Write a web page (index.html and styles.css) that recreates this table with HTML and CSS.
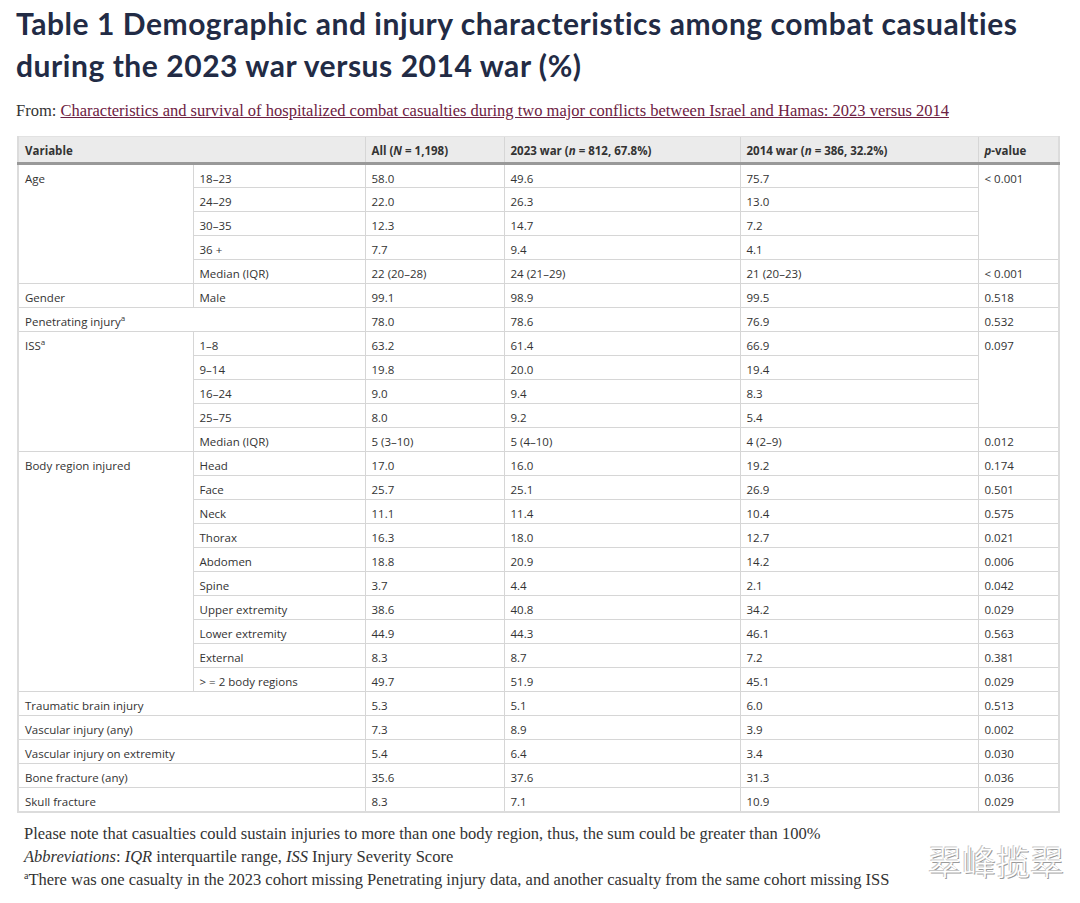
FILE: index.html
```html
<!DOCTYPE html>
<html lang="en">
<head>
<meta charset="utf-8">
<title>Table 1</title>
<link rel="stylesheet" href="styles.css">
</head>
<body>
<div class="page">
  <h1 class="title">Table 1 Demographic and injury characteristics among combat casualties during the 2023 war versus 2014 war (%)</h1>
  <p class="from">From: <a href="#">Characteristics and survival of hospitalized combat casualties during two major conflicts between Israel and Hamas: 2023 versus 2014</a></p>
  <table class="data">
    <colgroup>
      <col class="c1"><col class="c2"><col class="c3"><col class="c4"><col class="c5"><col class="c6">
    </colgroup>
    <thead>
      <tr>
        <th colspan="2">Variable</th>
        <th>All (<i>N</i> = 1,198)</th>
        <th>2023 war (<i>n</i> = 812, 67.8%)</th>
        <th>2014 war (<i>n</i> = 386, 32.2%)</th>
        <th><i>p</i>-value</th>
      </tr>
    </thead>
    <tbody>
      <tr><td rowspan="5">Age</td><td>18–23</td><td>58.0</td><td>49.6</td><td>75.7</td><td rowspan="4">&lt; 0.001</td></tr>
      <tr><td>24–29</td><td>22.0</td><td>26.3</td><td>13.0</td></tr>
      <tr><td>30–35</td><td>12.3</td><td>14.7</td><td>7.2</td></tr>
      <tr><td>36 +</td><td>7.7</td><td>9.4</td><td>4.1</td></tr>
      <tr><td>Median (IQR)</td><td>22 (20–28)</td><td>24 (21–29)</td><td>21 (20–23)</td><td>&lt; 0.001</td></tr>
      <tr><td>Gender</td><td>Male</td><td>99.1</td><td>98.9</td><td>99.5</td><td>0.518</td></tr>
      <tr><td colspan="2">Penetrating injury<sup>a</sup></td><td>78.0</td><td>78.6</td><td>76.9</td><td>0.532</td></tr>
      <tr><td rowspan="5">ISS<sup>a</sup></td><td>1–8</td><td>63.2</td><td>61.4</td><td>66.9</td><td rowspan="4">0.097</td></tr>
      <tr><td>9–14</td><td>19.8</td><td>20.0</td><td>19.4</td></tr>
      <tr><td>16–24</td><td>9.0</td><td>9.4</td><td>8.3</td></tr>
      <tr><td>25–75</td><td>8.0</td><td>9.2</td><td>5.4</td></tr>
      <tr><td>Median (IQR)</td><td>5 (3–10)</td><td>5 (4–10)</td><td>4 (2–9)</td><td>0.012</td></tr>
      <tr><td rowspan="10">Body region injured</td><td>Head</td><td>17.0</td><td>16.0</td><td>19.2</td><td>0.174</td></tr>
      <tr><td>Face</td><td>25.7</td><td>25.1</td><td>26.9</td><td>0.501</td></tr>
      <tr><td>Neck</td><td>11.1</td><td>11.4</td><td>10.4</td><td>0.575</td></tr>
      <tr><td>Thorax</td><td>16.3</td><td>18.0</td><td>12.7</td><td>0.021</td></tr>
      <tr><td>Abdomen</td><td>18.8</td><td>20.9</td><td>14.2</td><td>0.006</td></tr>
      <tr><td>Spine</td><td>3.7</td><td>4.4</td><td>2.1</td><td>0.042</td></tr>
      <tr><td>Upper extremity</td><td>38.6</td><td>40.8</td><td>34.2</td><td>0.029</td></tr>
      <tr><td>Lower extremity</td><td>44.9</td><td>44.3</td><td>46.1</td><td>0.563</td></tr>
      <tr><td>External</td><td>8.3</td><td>8.7</td><td>7.2</td><td>0.381</td></tr>
      <tr><td>&gt; = 2 body regions</td><td>49.7</td><td>51.9</td><td>45.1</td><td>0.029</td></tr>
      <tr><td colspan="2">Traumatic brain injury</td><td>5.3</td><td>5.1</td><td>6.0</td><td>0.513</td></tr>
      <tr><td colspan="2">Vascular injury (any)</td><td>7.3</td><td>8.9</td><td>3.9</td><td>0.002</td></tr>
      <tr><td colspan="2">Vascular injury on extremity</td><td>5.4</td><td>6.4</td><td>3.4</td><td>0.030</td></tr>
      <tr><td colspan="2">Bone fracture (any)</td><td>35.6</td><td>37.6</td><td>31.3</td><td>0.036</td></tr>
      <tr><td colspan="2">Skull fracture</td><td>8.3</td><td>7.1</td><td>10.9</td><td>0.029</td></tr>
    </tbody>
  </table>
  <div class="notes">
    <p>Please note that casualties could sustain injuries to more than one body region, thus, the sum could be greater than 100%</p>
    <p><i>Abbreviations</i>: <i>IQR</i> interquartile range, <i>ISS</i> Injury Severity Score</p>
    <p><sup>a</sup>There was one casualty in the 2023 cohort missing Penetrating injury data, and another casualty from the same cohort missing ISS</p>
  </div>
  <div class="watermark">翠峰揽翠</div>
</div>
</body>
</html>
```

FILE: styles.css
```css
* { box-sizing: border-box; }
html, body { margin: 0; padding: 0; background: #fff; }
.page {
  position: relative;
  width: 1080px;
  height: 903px;
  padding: 2px 0 0 16px;
  overflow: hidden;
}
.title {
  margin: 0;
  font-family: Lato, "Open Sans", sans-serif;
  font-weight: 700;
  font-size: 30px;
  letter-spacing: 0.55px;
  line-height: 42px;
  color: #222b45;
  width: 1045px;
}
.from {
  margin: 15px 0 0 0;
  font-family: "Liberation Serif", serif;
  font-size: 16.5px;
  line-height: 20px;
  color: #333;
}
.from a { color: #6d2142; text-decoration: underline; }
.data {
  margin: 15px 0 0 1px;
  width: 1041px;
  border-collapse: collapse;
  table-layout: fixed;
  font-family: "Open Sans", sans-serif;
  font-size: 11.5px;
  color: #333;
  border: 2px solid #dcdcdc;
  border-top: none;
}
.c1 { width: 175px; }
.c2 { width: 172px; }
.c3 { width: 139px; }
.c4 { width: 236px; }
.c5 { width: 238px; }
.c6 { width: 81px; }
.data th {
  background: #ebebeb;
  text-align: left;
  font-weight: 700;
  height: 27px;
  padding: 1px 6px 0 6px;
  border-bottom: 3px solid #999;
  border-left: 1px solid #d6d6d6;
  border-top: 1px solid #e2e2e2;
  color: #333;
}
.data th:first-child { border-left: none; }
.data td {
  vertical-align: top;
  padding: 5px 6px 0 6px;
  height: 24px;
  line-height: 17px;
  border: 1px solid #d6d6d6;
}
.data sup { font-size: 8px; line-height: 0; vertical-align: 5px; }
.notes {
  margin: 9px 0 0 8px;
  font-family: "Liberation Serif", serif;
  font-size: 16.5px;
  line-height: 23px;
  color: #333;
}
.notes p { margin: 0; }
.notes sup { font-size: 10px; line-height: 0; vertical-align: 6px; }
.watermark {
  position: absolute;
  left: 928px;
  top: 840px;
  font-family: "Noto Sans CJK SC", sans-serif;
  font-weight: 300;
  font-size: 34px;
  line-height: 42px;
  color: #fff;
  text-shadow: -1px -1px 0 #c8c8c8, 1px 1px 0 #9a9a9a;
}
```
